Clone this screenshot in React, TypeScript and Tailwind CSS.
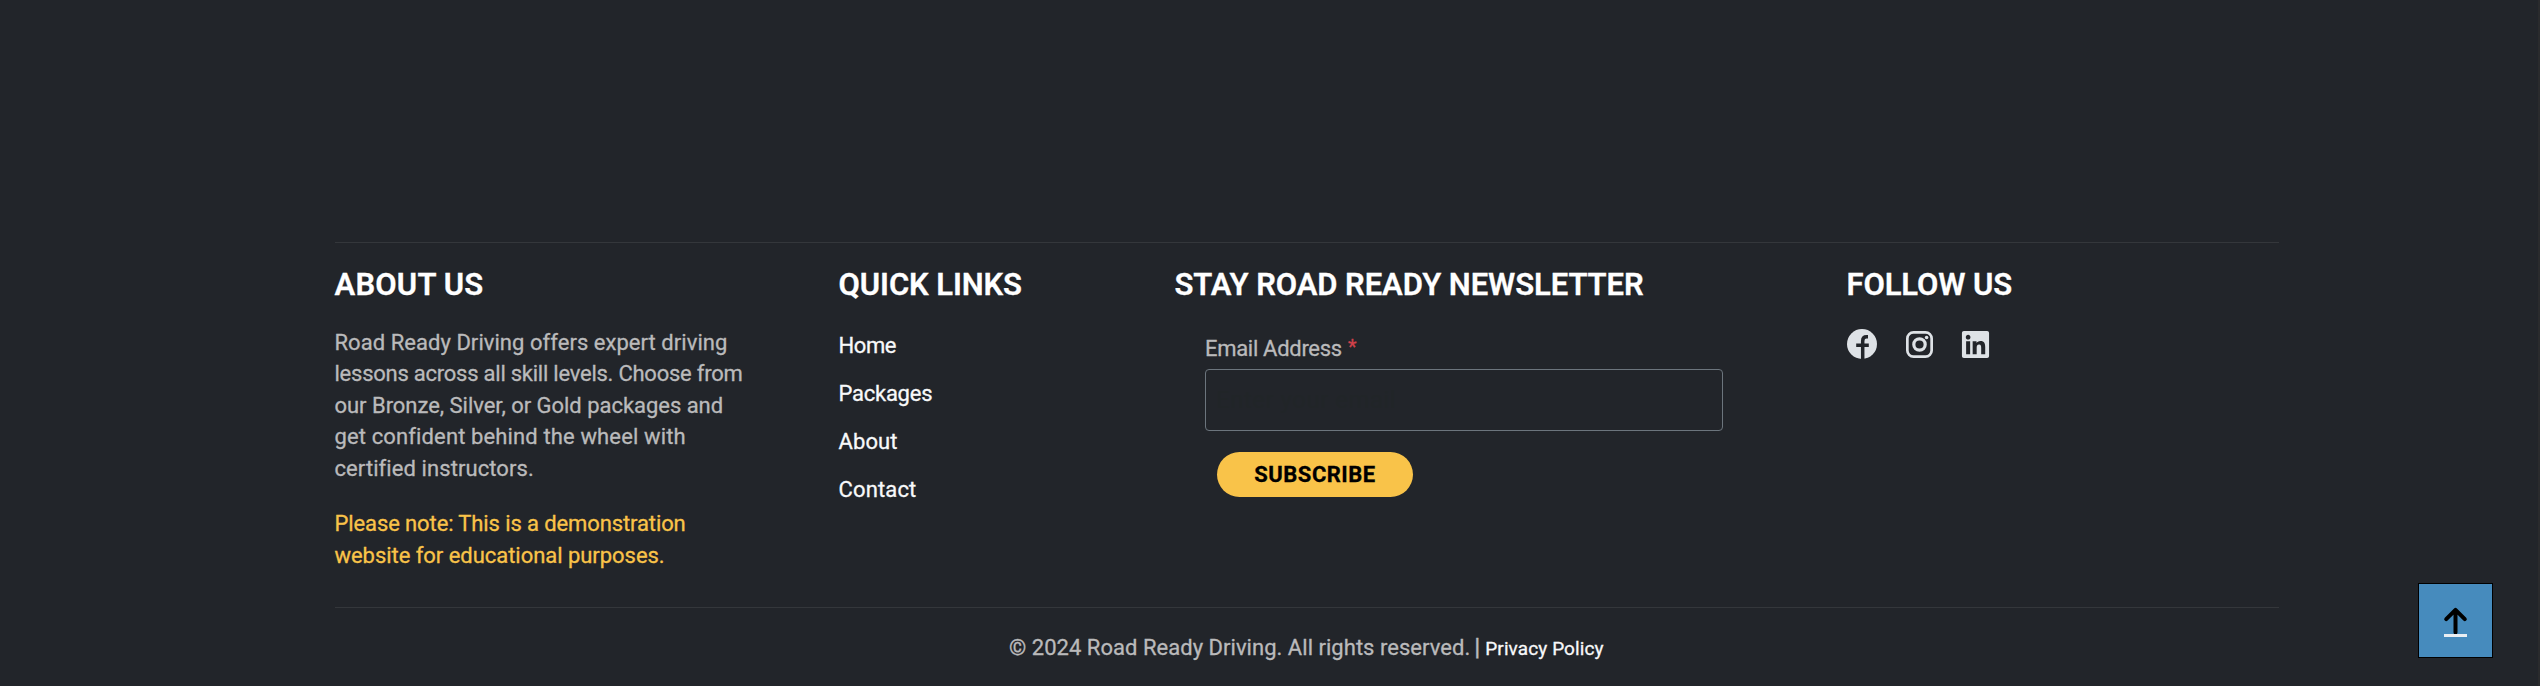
import { FaLinkedin } from "react-icons/fa6";

const about = [
  { text: "Road Ready Driving offers expert driving", cls: "tracking-[0.045px]" },
  { text: "lessons across all skill levels. Choose from", cls: "tracking-[-0.24px]" },
  { text: "our Bronze, Silver, or Gold packages and", cls: "tracking-[-0.03px]" },
  { text: "get confident behind the wheel with", cls: "tracking-[0.13px]" },
  { text: "certified instructors.", cls: "tracking-[0.08px]" },
];

const note = [
  { text: "Please note: This is a demonstration", cls: "tracking-[-0.11px]" },
  { text: "website for educational purposes.", cls: "tracking-[-0.04px]" },
];

const links = [
  { text: "Home", cls: "tracking-[-0.4px]" },
  { text: "Packages", cls: "tracking-[-0.25px]" },
  { text: "About", cls: "tracking-[0.1px]" },
  { text: "Contact", cls: "tracking-[0.15px]" },
];

function Heading({ text, cls }: { text: string; cls: string }) {
  return <h2 className={`text-[31px] leading-9 font-semibold text-white whitespace-nowrap ${cls}`}>{text}</h2>;
}

function Facebook() {
  return (
    <svg className="size-[30px]" viewBox="0 0 30 30" fill="none">
      <circle cx="15" cy="15" r="15" fill="#dee2e6" />
      <path d="M15.7 30V11.9c0-2.7 1.3-4.1 3.9-4.1H21M9.2 16.2h12.6" stroke="#22252a" strokeWidth="3.5" />
    </svg>
  );
}

function Instagram() {
  return (
    <svg className="size-[27px]" viewBox="0 0 27 27" fill="none" stroke="#dee2e6">
      <rect x="1.35" y="1.35" width="24.3" height="24.3" rx="6.2" strokeWidth="2.7" />
      <circle cx="13.5" cy="13.5" r="5.7" strokeWidth="3.2" />
      <circle cx="20.6" cy="6.5" r="1.8" fill="#dee2e6" stroke="none" />
    </svg>
  );
}

export default function App() {
  return (
    <div className="flex h-[686px] w-full justify-between overflow-hidden border-r-2 border-[#2a2b2d] bg-[#22252a] font-['Roboto','Noto_Sans',sans-serif] text-[22px] leading-[31.5px] text-[#bababb] [-webkit-text-stroke:0.3px]">
      <footer className="ml-[334.5px] w-[1944px] pt-[242px]">
        <div className="grid h-[365px] grid-cols-[504px_336px_672px_432px] border-t border-[#34373b] pt-6">
          <section>
            <Heading text="ABOUT US" cls="tracking-[0.2px]" />
            <p className="mt-[23.5px]">
              {about.map((l) => (
                <span key={l.text} className={`block whitespace-nowrap ${l.cls}`}>{l.text}</span>
              ))}
            </p>
            <p className="mt-6 text-[#f9c349]">
              {note.map((l) => (
                <span key={l.text} className={`block whitespace-nowrap ${l.cls}`}>{l.text}</span>
              ))}
            </p>
          </section>

          <section>
            <Heading text="QUICK LINKS" cls="tracking-[-0.09px]" />
            <ul className="mt-[26.5px] flex flex-col gap-[16.5px] text-[#f8f9fa]">
              {links.map((l) => (
                <li key={l.text} className={l.cls}>
                  <a href="#">{l.text}</a>
                </li>
              ))}
            </ul>
          </section>

          <section>
            <Heading text="STAY ROAD READY NEWSLETTER" cls="tracking-[-0.08px]" />
            <form className="mt-[29.5px] ml-[30.5px] flex w-[518px] flex-col items-start">
              <label className="tracking-[-0.3px]">
                Email Address <span className="ml-px align-[2px] text-[20px] leading-none text-[#d1414b]">*</span>
              </label>
              <input
                placeholder="Enter your email"
                className="mt-[5px] h-[62px] w-full rounded border border-[#6c757d] bg-transparent px-[10px] text-[24px] tracking-[0.5px] [-webkit-text-stroke:0] placeholder:text-[#212528] placeholder:opacity-100"
              />
              <button
                type="button"
                className="mt-[21px] ml-3 flex h-[45px] w-[196px] items-center justify-center rounded-full bg-[#f9c349] pt-px text-[22px] font-bold tracking-[0.5px] text-black"
              >
                SUBSCRIBE
              </button>
            </form>
          </section>

          <section>
            <Heading text="FOLLOW US" cls="tracking-[-0.1px]" />
            <div className="mt-[25.5px] flex items-center text-[#dee2e6]">
              <Facebook />
              <span className="ml-[29.5px]">
                <Instagram />
              </span>
              <FaLinkedin className="ml-[27px] size-[31px]" />
            </div>
          </section>
        </div>

        <div className="flex items-baseline border-t border-[#34373b] pt-[23.5px] pl-[674.5px] whitespace-nowrap">
          <span className="tracking-[0.03px]">© 2024 Road Ready Driving. All rights reserved.</span>
          <span className="ml-[4px] text-[24px] leading-none font-semibold">|</span>
          <a href="#" className="ml-[5px] text-[19px] tracking-[0.1px] text-[#f8f9fa]">
            Privacy Policy
          </a>
        </div>
      </footer>

      <a
        href="#"
        aria-label="Back to top"
        className="mr-[45px] mb-7 flex size-[75px] items-center justify-center self-end border border-black bg-[#468bbd]"
      >
        <svg className="size-[73px]" viewBox="0 0 73 73" fill="none">
          <path d="M36.5 48.5V26M27.2 35.2l9.3-9.3 9.3 9.3" stroke="#000" strokeWidth="4" strokeLinecap="round" strokeLinejoin="round" />
          <path d="M25 50h23v3H25z" fill="#e9eef3" />
        </svg>
      </a>
    </div>
  );
}
